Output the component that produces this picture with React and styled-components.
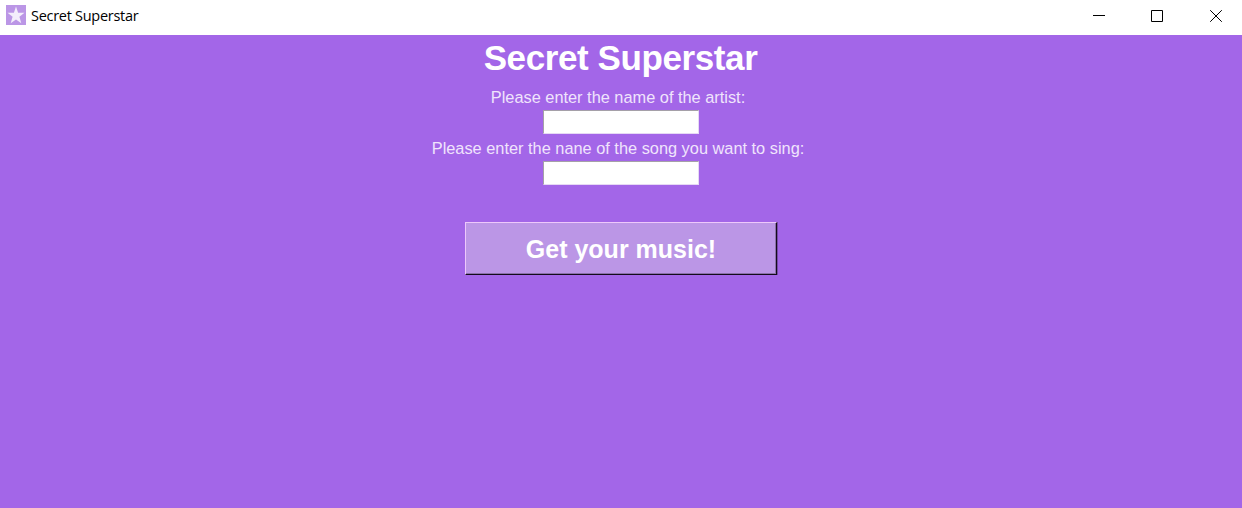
import React, { useState } from 'react';
import styled, { createGlobalStyle } from 'styled-components';

const App = () => {
  const [artist, setArtist] = useState('');
  const [song, setSong] = useState('');

  const handleSubmit = (e) => {
    e.preventDefault();
  };

  return (
    <>
      <GlobalStyle />
      <Window>
        <TitleBar>
          <AppIcon viewBox="0 0 20 20">
            <rect width="20" height="20" fill="#bb96e6" />
            <path
              d="M10 1.6 L12.1 7.7 L18.5 7.8 L13.4 11.7 L15.3 18.2 L10 14.4 L4.7 18.2 L6.6 11.7 L1.5 7.8 L7.9 7.7 Z"
              fill="#f3edfb"
            />
          </AppIcon>
          <WindowTitle>Secret Superstar</WindowTitle>
          <WindowControls>
            <ControlButton aria-label="Minimize">
              <ControlIcon viewBox="0 0 12 12">
                <path d="M0 5.5 H12" />
              </ControlIcon>
            </ControlButton>
            <ControlButton aria-label="Maximize">
              <ControlIcon viewBox="0 0 12 12">
                <path d="M0.5 0.5 H11.5 V11.5 H0.5 Z" />
              </ControlIcon>
            </ControlButton>
            <ControlButton aria-label="Close">
              <ControlIcon viewBox="0 0 12 12">
                <path d="M0.2 0.2 L11.8 11.8 M11.8 0.2 L0.2 11.8" />
              </ControlIcon>
            </ControlButton>
          </WindowControls>
        </TitleBar>
        <Content onSubmit={handleSubmit}>
          <Heading>Secret Superstar</Heading>
          <Label htmlFor="artist">Please enter the name of the artist:</Label>
          <Input id="artist" type="text" value={artist} onChange={(e) => setArtist(e.target.value)} />
          <Label htmlFor="song">Please enter the nane of the song you want to sing:</Label>
          <Input id="song" type="text" value={song} onChange={(e) => setSong(e.target.value)} />
          <MusicButton type="submit">Get your music!</MusicButton>
        </Content>
      </Window>
    </>
  );
};

const GlobalStyle = createGlobalStyle`
  * {
    box-sizing: border-box;
  }

  body {
    margin: 0;
    font-family: "Liberation Sans", Arial, sans-serif;
  }
`;

const Window = styled.div`
  display: flex;
  flex-direction: column;
  height: 100vh;
  overflow: hidden;
  background-color: #a366e8;
`;

const TitleBar = styled.div`
  display: flex;
  flex: none;
  align-items: flex-start;
  height: 35px;
  padding-left: 6px;
  background-color: #ffffff;
`;

const AppIcon = styled.svg`
  width: 20px;
  height: 20px;
  margin-top: 5px;
`;

const WindowTitle = styled.span`
  margin: 6px 0 0 5px;
  font-family: "Open Sans", "Noto Sans", sans-serif;
  font-size: 14.5px;
  line-height: 20px;
  letter-spacing: -0.28px;
  white-space: nowrap;
  color: #000000;
`;

const WindowControls = styled.div`
  display: flex;
  margin: 0 -3px 0 auto;
`;

const ControlButton = styled.button`
  display: flex;
  justify-content: center;
  width: 58.5px;
  height: 32px;
  padding: 10px 0 0;
  border: none;
  background: none;
`;

const ControlIcon = styled.svg`
  width: 12px;
  height: 12px;
  fill: none;
  stroke: #000000;
  stroke-width: 1;
`;

const Content = styled.form`
  display: flex;
  flex-direction: column;
  align-items: center;
`;

const Heading = styled.h1`
  margin: 3px 0 0;
  padding-right: 1px;
  font-size: 35px;
  line-height: 40px;
  letter-spacing: -0.4px;
  color: #ffffff;
`;

const Label = styled.label`
  height: 27px;
  padding: 9px 6px 0 0;
  font-size: 16.35px;
  line-height: 20px;
  white-space: nowrap;
  color: #f0e4fc;

  input + & {
    height: 22px;
    padding-top: 4px;
  }
`;

const Input = styled.input`
  width: 156px;
  height: 24px;
  margin-top: 5px;
  padding: 0 3px;
  border: 1px solid;
  border-color: #a5a0a8 #e6d9f5 #e6d9f5 #a5a0a8;
  border-radius: 0;
  outline: none;
  background-color: #ffffff;
`;

/* raised edge: light top/left, dark bottom/right with a soft inner line */
const MusicButton = styled.button`
  width: 312px;
  height: 53px;
  margin-top: 37px;
  padding: 1px 0 0;
  border: 1px solid;
  border-color: #edc8fb #140b1c #140b1c #edc8fb;
  box-shadow: inset -1px -1px 0 #8a70a9, 1px 0 0 #7449a6;
  font-family: inherit;
  font-size: 25px;
  font-weight: bold;
  color: #ffffff;
  background-color: #bb96e6;
`;

export default App;
